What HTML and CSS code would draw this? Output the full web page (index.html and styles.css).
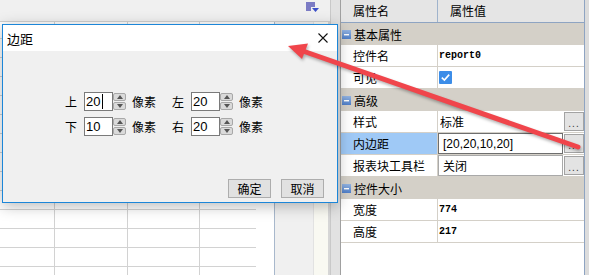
FILE: index.html
```html
<!DOCTYPE html>
<html>
<head>
<meta charset="utf-8">
<link rel="stylesheet" href="styles.css">
</head>
<body>
<div class="app">
  <div class="work">
    <div class="toolbar">
      <svg class="tool-icon" width="13" height="11" viewBox="0 0 13 11"><path d="M0 0h9v5H5v4H0z" fill="#7b7bc4"/><path d="M6 6h7l-3.5 4z" fill="#3b4fc8"/></svg>
    </div>
    <div class="workarea">
      <div class="sheet">
        <div class="cells">
          <i></i><i></i><i></i><i></i><i></i><i></i><i></i><i></i>
          <i></i><i></i><i></i><i></i><i></i><i></i><i></i><i></i>
          <i></i><i></i><i></i><i></i><i></i><i></i><i></i><i></i>
          <i></i><i></i><i></i><i></i><i></i><i></i><i></i><i></i>
          <i></i><i></i><i></i><i></i><i></i><i></i><i></i><i></i>
          <i></i><i></i><i></i><i></i><i></i><i></i><i></i><i></i>
          <i></i><i></i><i></i><i></i><i></i><i></i><i></i><i></i>
        </div>
      </div>
      <div class="strip-a"></div>
      <div class="strip-b"></div>
    </div>
  </div>
  <div class="gutter"></div>
  <div class="props">
    <div class="prow head"><div class="pname">属性名</div><div class="pval">属性值</div></div>
    <div class="cat"><svg width="9" height="9" viewBox="0 0 9 9"><defs><linearGradient id="g" x1="0" y1="0" x2="0" y2="1"><stop offset="0" stop-color="#93b4e2"/><stop offset="1" stop-color="#4f7fc9"/></linearGradient></defs><rect width="9" height="9" fill="url(#g)"/><rect x="2" y="4" width="5" height="1.4" fill="#fff"/></svg>基本属性</div>
    <div class="prow"><div class="pname">控件名</div><div class="pval mono">report0</div></div>
    <div class="prow"><div class="pname">可见</div><div class="pval"><svg class="check" width="13" height="13" viewBox="0 0 13 13"><rect width="13" height="13" rx="1" fill="#3c8de8"/><path d="M2.8 6.6l2.6 2.5L10.2 3.6" stroke="#fff" stroke-width="1.6" fill="none"/></svg></div></div>
    <div class="cat"><svg width="9" height="9" viewBox="0 0 9 9"><rect width="9" height="9" fill="url(#g)"/><rect x="2" y="4" width="5" height="1.4" fill="#fff"/></svg>高级</div>
    <div class="prow"><div class="pname">样式</div><div class="pval"><span class="vtext">标准</span><span class="more">...</span></div></div>
    <div class="prow"><div class="pname sel">内边距</div><div class="pval"><span class="editor focus">[20,20,10,20]</span><span class="more">...</span></div></div>
    <div class="prow"><div class="pname">报表块工具栏</div><div class="pval"><span class="editor">关闭</span><span class="more">...</span></div></div>
    <div class="cat"><svg width="9" height="9" viewBox="0 0 9 9"><rect width="9" height="9" fill="url(#g)"/><rect x="2" y="4" width="5" height="1.4" fill="#fff"/></svg>控件大小</div>
    <div class="prow"><div class="pname">宽度</div><div class="pval mono">774</div></div>
    <div class="prow"><div class="pname">高度</div><div class="pval mono">217</div></div>
  </div>
  <div class="edge"></div>

  <div class="dialog">
    <div class="dtitle"><span>边距</span><svg width="10" height="10" viewBox="0 0 10 10"><path d="M0.5 0.5L9.5 9.5M9.5 0.5L0.5 9.5" stroke="#111" stroke-width="1.1"/></svg></div>
    <div class="dbody">
      <div class="form">
        <div class="frow">
          <span class="lbl">上</span>
          <span class="spin"><span class="num">20<i class="caret"></i></span><span class="arrows"><b class="up"></b><b class="down"></b></span></span>
          <span class="unit">像素</span>
          <span class="lbl">左</span>
          <span class="spin"><span class="num">20</span><span class="arrows"><b class="up"></b><b class="down"></b></span></span>
          <span class="unit">像素</span>
        </div>
        <div class="frow">
          <span class="lbl">下</span>
          <span class="spin"><span class="num">10</span><span class="arrows"><b class="up"></b><b class="down"></b></span></span>
          <span class="unit">像素</span>
          <span class="lbl">右</span>
          <span class="spin"><span class="num">20</span><span class="arrows"><b class="up"></b><b class="down"></b></span></span>
          <span class="unit">像素</span>
        </div>
      </div>
      <div class="buttons"><button class="btn">确定</button><button class="btn">取消</button></div>
    </div>
  </div>

  <svg class="arrow" width="589" height="275" viewBox="0 0 589 275">
    <line x1="578" y1="147" x2="300" y2="50" stroke="#f0454b" stroke-width="5" stroke-linecap="round"/>
    <polygon points="288,46 308,43.5 302,59" fill="#f0454b"/>
  </svg>
</div>
</body>
</html>
```

FILE: styles.css
```css
body {
  margin: 0;
  font-family: "Noto Sans CJK SC", "Liberation Sans", sans-serif;
  font-size: 12px;
  color: #000;
}

.app {
  position: relative;
  display: flex;
  width: 589px;
  height: 275px;
  overflow: hidden;
  background: #e4e4e4;
}

.work {
  flex: none;
  width: 331px;
  box-sizing: border-box;
  border-right: 1px solid #c9c9c9;
  display: flex;
  flex-direction: column;
}

.toolbar {
  height: 22px;
  box-sizing: border-box;
  background: #f0f0f0;
  border-bottom: 1px solid #d0d0d0;
  display: flex;
  justify-content: flex-end;
  align-items: flex-start;
  padding: 2px 11px 0 0;
}

.workarea {
  flex: 1;
  display: flex;
  min-height: 0;
}

.sheet {
  flex: none;
  width: 275px;
  box-sizing: border-box;
  background: #fff;
  border-right: 1px solid #a8b8cc;
}

.cells {
  display: grid;
  grid-template-columns: 55px 73px 72px 56px;
  grid-template-rows: 17px;
  grid-auto-rows: 19px;
  width: 256px;
}

.cells i {
  border-bottom: 1px solid #d2d2d2;
  border-right: 1px solid #d2d2d2;
}

.cells i:nth-child(4n) {
  border-right: 0;
}

.strip-a {
  flex: none;
  width: 38px;
  background: #f0f0f0;
  border-right: 1px solid #e2e2e2;
}

.strip-b {
  flex: 1;
  background: #f9f9f2;
  border-right: 2px solid #d6d6d6;
}

.gutter {
  flex: none;
  width: 9px;
  background: #e2e2e2;
}

.props {
  flex: none;
  width: 245px;
  box-sizing: border-box;
  border-left: 1px solid #a0a0a0;
  border-right: 1px solid #8ea4c2;
  background: #fff;
}

.edge {
  flex: 1;
  background: #dcdcdc;
}

.prow {
  display: flex;
  height: 22px;
  box-sizing: border-box;
  border-bottom: 1px solid #d4d0c8;
}

.prow.head {
  height: 23px;
  background: #e5e5e5;
  border-bottom: 1px solid #8ea4c2;
}

.pname {
  flex: none;
  width: 97px;
  box-sizing: border-box;
  border-right: 1px solid #d4d0c8;
  padding-left: 12px;
  line-height: 21px;
}

.head .pname {
  border-right-color: #9fb3cc;
  line-height: 22px;
}

.head .pval {
  padding-left: 12px;
  line-height: 22px;
}

.pname.sel {
  background: #9fc9f6;
}

.pval {
  flex: 1;
  display: flex;
  align-items: center;
  min-width: 0;
}

.pval.mono {
  padding-left: 1px;
  font-family: "Liberation Mono", monospace;
  font-weight: bold;
  font-size: 10px;
}

.check {
  margin-left: 1px;
}

.vtext {
  padding-left: 2px;
}

.editor {
  width: 125px;
  height: 21px;
  box-sizing: border-box;
  border: 1px solid #a9a9a9;
  padding-left: 4px;
  display: flex;
  align-items: center;
}

.editor.focus {
  border-color: #6e6e6e;
  font-family: "Liberation Sans", sans-serif;
  font-size: 12px;
}

.more {
  margin-left: auto;
  width: 20px;
  height: 19px;
  box-sizing: border-box;
  border: 1px solid #a3a3a3;
  background: #e3e3e3;
  display: flex;
  align-items: flex-end;
  justify-content: center;
  font-family: "Liberation Sans", sans-serif;
  font-size: 10px;
  line-height: 12px;
  letter-spacing: 1px;
  color: #333;
}

.cat {
  height: 22px;
  background: #d4d0c8;
  display: flex;
  align-items: center;
  gap: 3px;
  padding-left: 1px;
}

.dialog {
  position: absolute;
  left: 2px;
  top: 24px;
  width: 336px;
  height: 179px;
  box-sizing: border-box;
  border: 1px solid #1c86d8;
  background: #f0f0f0;
  display: flex;
  flex-direction: column;
  box-shadow: 0 3px 14px rgba(0, 0, 0, 0.28);
}

.dtitle {
  height: 26px;
  flex: none;
  background: #fff;
  display: flex;
  align-items: center;
  justify-content: space-between;
  padding: 0 9px 0 4px;
  font-size: 13px;
}

.dbody {
  flex: 1;
  display: flex;
  flex-direction: column;
  padding: 41px 13px 4px 62px;
}

.form {
  display: flex;
  flex-direction: column;
  gap: 6px;
}

.frow {
  display: flex;
  align-items: center;
  height: 19px;
}

.lbl {
  width: 12px;
  margin-right: 7px;
}

.unit + .lbl {
  margin-left: 16px;
}

.unit {
  margin-left: 6px;
  width: 24px;
}

.spin {
  display: flex;
  height: 19px;
}

.num {
  width: 29px;
  box-sizing: border-box;
  border: 1px solid #7a7a7a;
  background: #fff;
  font-family: "Liberation Sans", sans-serif;
  font-size: 13px;
  padding-left: 1px;
  display: flex;
  align-items: center;
}

.caret {
  width: 1px;
  height: 15px;
  background: #000;
  margin-left: 2px;
}

.arrows {
  width: 13px;
  display: flex;
  flex-direction: column;
  gap: 1px;
  padding: 1px 0;
  box-sizing: border-box;
}

.arrows b {
  flex: 1;
  background: #dadada;
  border: 1px solid #a8a8a8;
  border-radius: 2px;
  display: flex;
  align-items: center;
  justify-content: center;
}

.arrows b::before {
  content: "";
  border-left: 3.5px solid transparent;
  border-right: 3.5px solid transparent;
}

.arrows .up::before {
  border-bottom: 4px solid #555;
}

.arrows .down::before {
  border-top: 4px solid #555;
}

.buttons {
  margin-top: auto;
  display: flex;
  justify-content: flex-end;
  gap: 10px;
}

.btn {
  width: 43px;
  height: 19px;
  box-sizing: border-box;
  border: 1px solid #adadad;
  background: #e1e1e1;
  font-family: "Noto Sans CJK SC", sans-serif;
  font-size: 12px;
  line-height: 17px;
  padding: 0;
  color: #000;
}

.arrow {
  position: absolute;
  left: 0;
  top: 0;
  pointer-events: none;
  filter: drop-shadow(1px 2px 1.5px rgba(0, 0, 0, 0.3));
}
```
